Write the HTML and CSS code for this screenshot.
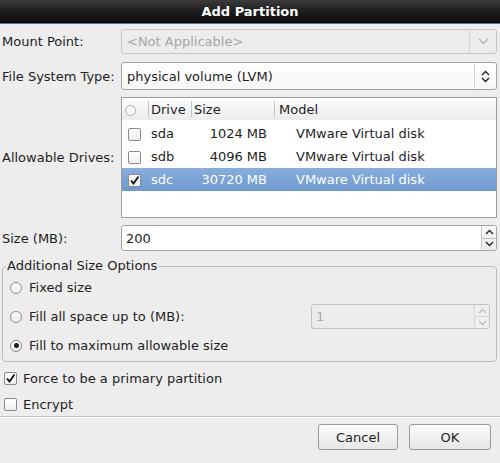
FILE: index.html
```html
<!DOCTYPE html>
<html>
<head>
<meta charset="utf-8">
<link rel="stylesheet" href="styles.css">
</head>
<body>
<div class="window">
  <div class="titlebar">Add Partition</div>
  <div class="form">
    <div class="label r-mount">Mount Point:</div>
    <div class="combo disabled r-mount">
      <span class="combo-text">&lt;Not Applicable&gt;</span>
      <span class="combo-btn"><svg width="11" height="7" viewBox="0 0 11 7"><path d="M1 1 L5.5 5.5 L10 1" fill="none" stroke="#b0b0b0" stroke-width="1.3"/></svg></span>
    </div>

    <div class="label r-fs">File System Type:</div>
    <div class="combo r-fs">
      <span class="combo-text">physical volume (LVM)</span>
      <span class="combo-btn narrow"><svg width="9" height="13" viewBox="0 0 9 13"><path d="M1 5 L4.5 1.5 L8 5 M1 8 L4.5 11.5 L8 8" fill="none" stroke="#222" stroke-width="1.4"/></svg></span>
    </div>

    <div class="label r-drives">Allowable Drives:</div>
    <div class="drives r-drives">
      <table class="dtable">
        <colgroup><col class="c-chk"><col class="c-drive"><col class="c-size"><col class="c-model"></colgroup>
        <thead>
          <tr>
            <th class="h-chk"><span class="hcircle"></span></th>
            <th class="h-sep">Drive</th>
            <th class="h-sep">Size</th>
            <th class="h-sep">Model</th>
          </tr>
        </thead>
        <tbody>
          <tr>
            <td class="d-chk"><span class="cbox"></span></td>
            <td class="d-drive">sda</td>
            <td class="d-size">1024 MB</td>
            <td class="d-model">VMware Virtual disk</td>
          </tr>
          <tr>
            <td class="d-chk"><span class="cbox"></span></td>
            <td class="d-drive">sdb</td>
            <td class="d-size">4096 MB</td>
            <td class="d-model">VMware Virtual disk</td>
          </tr>
          <tr class="selected">
            <td class="d-chk"><span class="cbox"><svg width="11" height="11" viewBox="0 0 11 11"><path d="M2 5.5 L4.5 8.5 L9.5 1.5" fill="none" stroke="#111" stroke-width="1.8"/></svg></span></td>
            <td class="d-drive">sdc</td>
            <td class="d-size">30720 MB</td>
            <td class="d-model">VMware Virtual disk</td>
          </tr>
        </tbody>
      </table>
    </div>

    <div class="label r-size">Size (MB):</div>
    <div class="spin r-size">
      <span class="spin-text">200</span>
      <span class="spin-btns">
        <span class="sb up"><svg width="9" height="6" viewBox="0 0 9 6"><path d="M1 5 L4.5 1.5 L8 5" fill="none" stroke="#222" stroke-width="1.4"/></svg></span>
        <span class="sb"><svg width="9" height="6" viewBox="0 0 9 6"><path d="M1 1 L4.5 4.5 L8 1" fill="none" stroke="#222" stroke-width="1.4"/></svg></span>
      </span>
    </div>
  </div>

  <div class="frame">
    <span class="frame-title">Additional Size Options</span>
    <div class="opt"><span class="radio"></span><span>Fixed size</span></div>
    <div class="opt"><span class="radio"></span><span>Fill all space up to (MB):</span>
      <div class="spin small disabled">
        <span class="spin-text">1</span>
        <span class="spin-btns">
          <span class="sb up"><svg width="9" height="6" viewBox="0 0 9 6"><path d="M1 5 L4.5 1.5 L8 5" fill="none" stroke="#b8b8b8" stroke-width="1.2"/></svg></span>
          <span class="sb"><svg width="9" height="6" viewBox="0 0 9 6"><path d="M1 1 L4.5 4.5 L8 1" fill="none" stroke="#b8b8b8" stroke-width="1.2"/></svg></span>
        </span>
      </div>
    </div>
    <div class="opt"><span class="radio on"></span><span>Fill to maximum allowable size</span></div>
  </div>

  <div class="checks">
    <div class="chk"><span class="cbox"><svg width="11" height="11" viewBox="0 0 11 11"><path d="M2 5.5 L4.5 8.5 L9.5 1.5" fill="none" stroke="#111" stroke-width="1.8"/></svg></span><span>Force to be a primary partition</span></div>
    <div class="chk"><span class="cbox"></span><span>Encrypt</span></div>
  </div>

  <div class="separator"></div>

  <div class="buttons">
    <button class="btn cancel">Cancel</button>
    <button class="btn ok">OK</button>
  </div>
</div>
</body>
</html>
```

FILE: styles.css
```css
html, body {
  margin: 0;
  padding: 0;
  background: #ededed;
}
body {
  font-family: "DejaVu Sans", sans-serif;
  font-size: 13px;
  color: #1e1e1e;
}
.window {
  width: 500px;
  height: 463px;
  overflow: hidden;
}
.titlebar {
  height: 23px;
  line-height: 23px;
  text-align: center;
  font-weight: bold;
  color: #fff;
  background: linear-gradient(#3c3c3c, #1c1c1c 50%, #0c0c0c);
  border-bottom: 1px solid #54719a;
}
.form {
  display: grid;
  grid-template-columns: 119px 376px;
  padding-left: 2px;
}
.label {
  align-self: center;
  white-space: nowrap;
}
.r-mount { margin-top: 5px; }
.r-fs { margin-top: 8px; }
.r-drives { margin-top: 7px; }
.r-size { margin-top: 7px; }

.combo {
  display: flex;
  box-sizing: border-box;
  height: 25px;
  border: 1px solid #a4a4a4;
  border-radius: 3px;
  background: linear-gradient(#ffffff, #f6f6f6);
}
.combo.r-fs { height: 28px; }
.combo.disabled {
  background: #ececec;
  border-color: #c6c6c6;
  color: #a6a6a6;
}
.combo-text {
  flex: 1;
  display: flex;
  align-items: center;
  padding-left: 5px;
}
.combo-btn {
  width: 26px;
  display: flex;
  align-items: center;
  justify-content: center;
  border-left: 1px solid #d2d2d2;
}
.combo-btn.narrow {
  width: 21px;
}

.drives {
  box-sizing: border-box;
  height: 121px;
  border: 1px solid #9e9e9e;
  background: #fff;
}
.dtable {
  width: 100%;
  border-collapse: collapse;
  table-layout: fixed;
}
.c-chk { width: 26px; }
.c-drive { width: 43px; }
.c-size { width: 83px; }
.dtable th {
  height: 22px;
  padding: 0;
  text-align: left;
  font-weight: normal;
  background: linear-gradient(#fdfdfd, #ececec);
  border-bottom: 1px solid #cfcfcf;
}
.h-chk { text-align: center; }
.hcircle {
  display: inline-block;
  width: 9px;
  height: 9px;
  border: 1px solid #b0b0b0;
  border-radius: 50%;
  background: #f8f8f8;
  vertical-align: middle;
  margin-left: 3px;
}
.h-sep {
  padding-left: 3px !important;
  background-image: linear-gradient(#c4c4c4, #c4c4c4), linear-gradient(#fdfdfd, #ececec) !important;
  background-size: 1px 16px, 100% 100% !important;
  background-position: 0 3px, 0 0 !important;
  background-repeat: no-repeat !important;
}
.h-sep:last-child { padding-left: 5px !important; }
.dtable tbody tr:first-child td { border-top: 2px solid #fff; }
.dtable td {
  height: 23px;
  padding: 0;
  white-space: nowrap;
}
.d-chk { padding-left: 6px !important; }
.d-drive { padding-left: 3px !important; }
.d-size { text-align: right; padding-right: 7px !important; }
.d-model { padding-left: 22px !important; }
.selected td {
  background: linear-gradient(#88aedc, #6f99cf);
  color: #fff;
}
.cbox {
  box-sizing: border-box;
  display: inline-flex;
  align-items: center;
  justify-content: center;
  width: 13px;
  height: 13px;
  border: 1px solid #8a8a8a;
  border-radius: 2px;
  background: linear-gradient(#ffffff, #efefef);
  vertical-align: middle;
}

.spin {
  display: flex;
  box-sizing: border-box;
  height: 26px;
  border: 1px solid #a4a4a4;
  border-radius: 3px;
  background: #fff;
}
.spin-text {
  flex: 1;
  display: flex;
  align-items: center;
  padding-left: 4px;
}
.spin-btns {
  width: 14px;
  display: flex;
  flex-direction: column;
  border-left: 1px solid #c8c8c8;
  background: linear-gradient(#fafafa, #ececec);
  border-radius: 0 2px 2px 0;
}
.sb {
  flex: 1;
  display: flex;
  align-items: center;
  justify-content: center;
}
.sb.up { border-bottom: 1px solid #c0c0c0; }
.spin.small {
  width: 179px;
  height: 25px;
  margin-left: auto;
  margin-right: 6px;
}
.spin.disabled {
  background: #ececec;
  border-color: #c2c2c2;
  color: #a8a8a8;
}
.spin.disabled .spin-btns {
  background: #efefef;
  border-left-color: #d6d6d6;
}
.spin.disabled .sb.up { border-bottom-color: #d6d6d6; }

.frame {
  position: relative;
  box-sizing: border-box;
  height: 96px;
  margin: 15px 3px 0 2px;
  padding: 6px 0 0 7px;
  border: 1px solid #bcbcbc;
  border-radius: 4px;
}
.frame-title {
  position: absolute;
  top: -9px;
  left: 3px;
  padding: 0 1px;
  line-height: 16px;
  background: #ededed;
}
.opt {
  display: flex;
  align-items: center;
  height: 29px;
  gap: 7px;
}
.radio {
  box-sizing: border-box;
  display: inline-flex;
  align-items: center;
  justify-content: center;
  width: 12px;
  height: 12px;
  border: 1px solid #8c8c8c;
  border-radius: 50%;
  background: linear-gradient(#ffffff, #ececec);
}
.radio.on::after {
  content: "";
  width: 5px;
  height: 5px;
  border-radius: 50%;
  background: #1e1e1e;
}

.checks {
  margin-top: 4px;
  padding-left: 4px;
}
.chk {
  display: flex;
  align-items: center;
  gap: 6px;
  height: 24px;
  margin-bottom: 2px;
}
.chk:last-child { margin-bottom: 0; }
.separator {
  height: 1px;
  background: #c4c4c4;
  border-bottom: 1px solid #fafafa;
}
.buttons {
  display: flex;
  justify-content: flex-end;
  gap: 11px;
  padding-right: 9px;
  margin-top: 6px;
}
.btn {
  box-sizing: border-box;
  height: 26px;
  border: 1px solid #9a9a9a;
  border-radius: 3px;
  background: linear-gradient(#fbfbfb, #e6e6e6);
  font-family: "DejaVu Sans", sans-serif;
  font-size: 13px;
  color: #1e1e1e;
  padding: 0;
}
.cancel { width: 80px; }
.ok { width: 82px; }
```
